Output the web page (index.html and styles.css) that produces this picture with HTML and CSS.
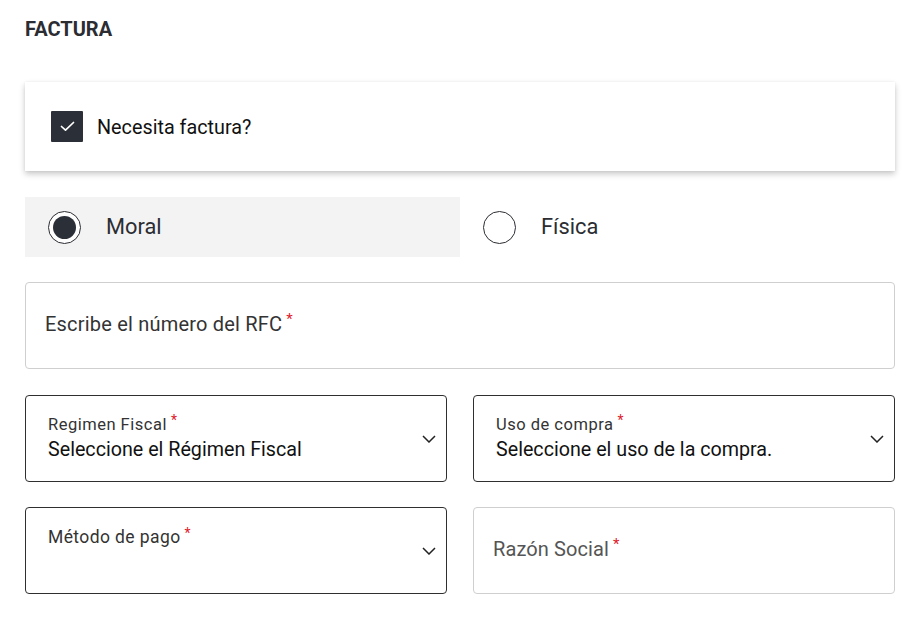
FILE: index.html
```html
<!DOCTYPE html>
<html lang="es">
<head>
<meta charset="utf-8">
<link rel="stylesheet" href="styles.css">
</head>
<body>
<div class="page">
  <h2 class="title">FACTURA</h2>
  <div class="card">
    <span class="checkbox">
      <svg width="15" height="11" viewBox="0 0 15 11"><path d="M1.5 5.5 L5.5 9.2 L13.5 1.5" fill="none" stroke="#fff" stroke-width="1.7" stroke-linecap="round" stroke-linejoin="round"/></svg>
    </span>
    <span class="check-label">Necesita factura?</span>
  </div>
  <div class="radios">
    <div class="radio-opt selected">
      <span class="radio"><span class="dot"></span></span>
      <span class="radio-label">Moral</span>
    </div>
    <div class="radio-opt">
      <span class="radio"></span>
      <span class="radio-label">Física</span>
    </div>
  </div>
  <div class="field input full">
    <span class="ph">Escribe el número del RFC<span class="req">*</span></span>
  </div>
  <div class="grid">
    <div class="field select">
      <div class="sel-text">
        <span class="small">Regimen Fiscal<span class="req">*</span></span>
        <span class="value">Seleccione el Régimen Fiscal</span>
      </div>
      <svg class="chev" width="14" height="8" viewBox="0 0 14 8"><path d="M1 1 L7 7 L13 1" fill="none" stroke="#222" stroke-width="1.5"/></svg>
    </div>
    <div class="field select">
      <div class="sel-text">
        <span class="small">Uso de compra<span class="req">*</span></span>
        <span class="value">Seleccione el uso de la compra.</span>
      </div>
      <svg class="chev" width="14" height="8" viewBox="0 0 14 8"><path d="M1 1 L7 7 L13 1" fill="none" stroke="#222" stroke-width="1.5"/></svg>
    </div>
    <div class="field select top">
      <div class="sel-text">
        <span class="small big">Método de pago<span class="req">*</span></span>
      </div>
      <svg class="chev low" width="14" height="8" viewBox="0 0 14 8"><path d="M1 1 L7 7 L13 1" fill="none" stroke="#222" stroke-width="1.5"/></svg>
    </div>
    <div class="field input">
      <span class="ph gray">Razón Social<span class="req">*</span></span>
    </div>
  </div>
</div>
</body>
</html>
```
FILE: styles.css
```css
* { box-sizing: border-box; }
body {
  margin: 0;
  background: #fff;
  font-family: Roboto, "Liberation Sans", sans-serif;
  color: #2b2d33;
}
.page {
  width: 870px;
  margin-left: 25px;
  padding-top: 18px;
}
.title {
  margin: 0;
  font-size: 20px;
  font-weight: 700;
  letter-spacing: 0;
  line-height: 22px;
  color: #2b2d33;
}
.card {
  margin-top: 42px;
  height: 89px;
  background: #fff;
  box-shadow: 0 3px 6px rgba(0,0,0,0.22), 0 0 2px rgba(0,0,0,0.06);
  display: flex;
  align-items: center;
  padding-left: 26px;
}
.checkbox {
  width: 32px;
  height: 31px;
  background: #2b2f38;
  border-radius: 1px;
  display: flex;
  align-items: center;
  justify-content: center;
}
.check-label {
  margin-left: 14px;
  font-size: 19.8px;
  color: #111;
  padding-top: 2px;
}
.radios {
  margin-top: 26px;
  display: flex;
  height: 60px;
}
.radio-opt {
  width: 435px;
  display: flex;
  align-items: center;
  padding-left: 23px;
}
.radio-opt.selected { background: #f3f3f3; }
.radio {
  width: 33px;
  height: 33px;
  border: 1.3px solid #2b2d33;
  border-radius: 50%;
  display: flex;
  align-items: center;
  justify-content: center;
  background: #fff;
}
.dot {
  width: 23px;
  height: 23px;
  border-radius: 50%;
  background: #2b2f38;
}
.radio-label {
  margin-left: 25px;
  font-size: 21.8px;
  color: #2b2d33;
  padding-bottom: 2px;
}
.field {
  border-radius: 4px;
  background: #fff;
}
.input {
  border: 1px solid #cfcfcf;
  height: 87px;
  display: flex;
  align-items: center;
  padding-left: 19px;
  padding-bottom: 6px;
}
.full { margin-top: 25px; }
.ph {
  font-size: 20px;
  letter-spacing: 0.2px;
  color: #333;
}
.ph.gray { color: #555; letter-spacing: 0.1px; }
.req {
  color: #e0202c;
  font-size: 15px;
  vertical-align: 7px;
  margin-left: 4px;
  letter-spacing: 0;
}
.grid {
  margin-top: 26px;
  display: grid;
  grid-template-columns: 422px 422px;
  column-gap: 26px;
  row-gap: 25px;
}
.select {
  border: 1px solid #2f2f2f;
  height: 87px;
  display: flex;
  align-items: center;
  justify-content: space-between;
  padding: 0 10px 0 22px;
}
.select.top { align-items: flex-start; }
.sel-text {
  display: flex;
  flex-direction: column;
  padding-bottom: 5px;
}
.select.top .sel-text { padding-top: 14px; }
.small {
  font-size: 16.5px;
  letter-spacing: 0.5px;
  color: #333;
  line-height: 22px;
}
.small .req { font-size: 14px; vertical-align: 5px; margin-left: 4px; }
.small.big { font-size: 17.5px; letter-spacing: 0.4px; }
.value {
  font-size: 19.7px;
  color: #111;
  line-height: 27px;
}
.chev { flex: none; }
.chev.low { align-self: center; }
```
